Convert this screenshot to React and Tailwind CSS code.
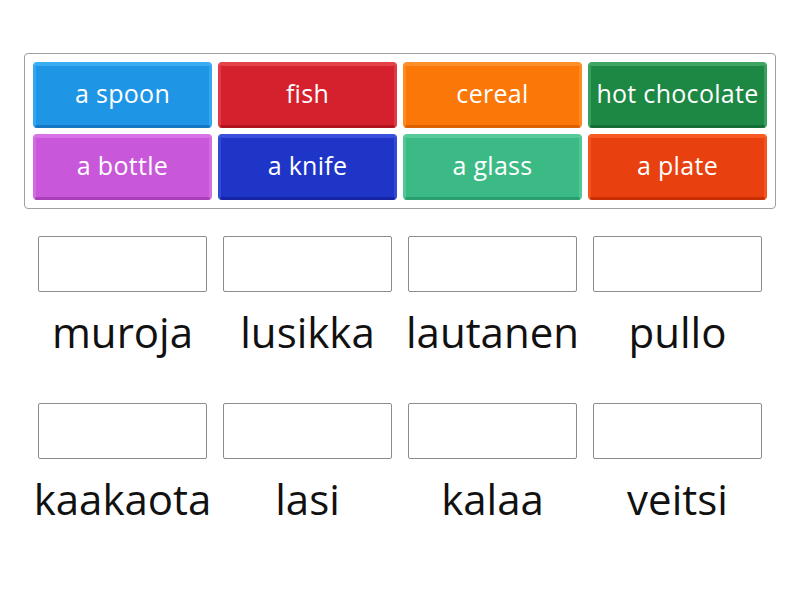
const tiles = [
  { t: "a spoon", c: "bg-[#1f95e6] border-t-[#3aaef5] border-x-[#34a7f2] border-b-[#1577c4]" },
  { t: "fish", c: "bg-[#d5212e] border-t-[#e5414b] border-x-[#e03a45] border-b-[#b2141f]" },
  { t: "cereal", c: "bg-[#fa7708] border-t-[#ff8f2a] border-x-[#ff8a22] border-b-[#dc6100]" },
  { t: "hot chocolate", c: "bg-[#1d8744] border-t-[#3fa563] border-x-[#37a05c] border-b-[#136f35]" },
  { t: "a bottle", c: "bg-[#c858d9] border-t-[#d872e6] border-x-[#d36ce2] border-b-[#aa3fbc]" },
  { t: "a knife", c: "bg-[#1e35c8] border-t-[#3a50dc] border-x-[#3249d6] border-b-[#1424a4]" },
  { t: "a glass", c: "bg-[#3cba85] border-t-[#56cb99] border-x-[#51c795] border-b-[#2a9e6c]" },
  { t: "a plate", c: "bg-[#e9400f] border-t-[#f75a22] border-x-[#f4551e] border-b-[#c92f04]" },
];

const words = [
  ["muroja", "lusikka", "lautanen", "pullo"],
  ["kaakaota", "lasi", "kalaa", "veitsi"],
];

export default function App() {
  return (
    <div className="w-[800px] h-[600px] bg-white font-['Open_Sans',sans-serif] flex flex-col items-center pt-[53px]">
      <div className="w-[752px] border border-[#a0a0a0] rounded-[4px] p-[8px] grid grid-cols-4 gap-[6px]">
        {tiles.map((e, index) => (
          <div
            key={index}
            className={`h-[66px] rounded-[4px] border-t-[4px] border-x-[3px] border-b-[3px] pb-[4px] flex items-center justify-center text-white text-[25px] tracking-[0.3px] whitespace-nowrap ${e.c}`}
          >
            {e.t}
          </div>
        ))}
      </div>
      <div className="flex flex-col gap-[43px] mt-[27px]">
        {words.map((row, i) => (
          <div key={i} className="flex gap-[16px]">
            {row.map((w) => (
              <div key={w} className="w-[169px] flex flex-col items-center">
                <div className="w-[169px] h-[56px] border border-[#8c8c8c] rounded-[2px]" />
                <p className="mt-[12px] h-[56px] leading-[56px] text-[42px] text-[#111] whitespace-nowrap">{w}</p>
              </div>
            ))}
          </div>
        ))}
      </div>
    </div>
  );
}
